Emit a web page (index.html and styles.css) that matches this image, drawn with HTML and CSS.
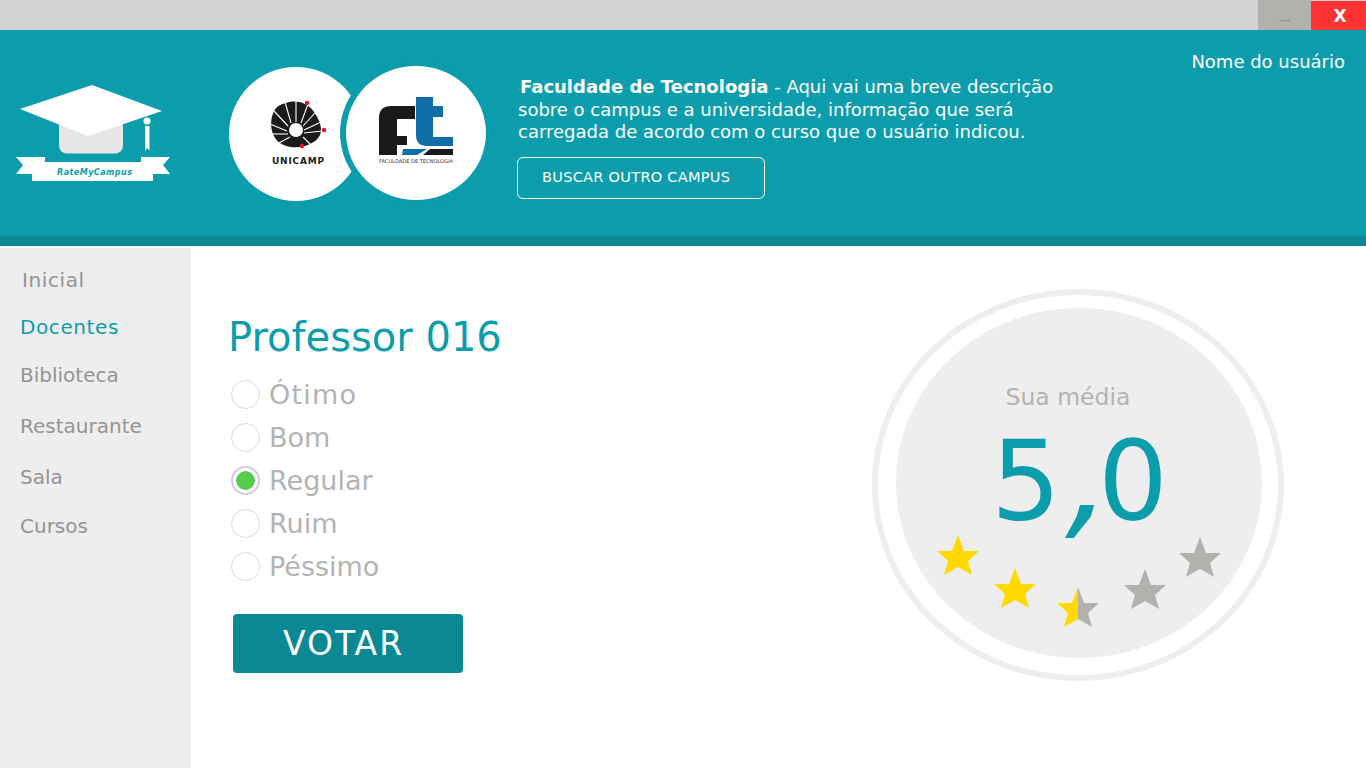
FILE: index.html
```html
<!DOCTYPE html>
<html lang="pt-br">
<head>
    <meta charset="UTF-8">
    <meta name="viewport" content="width=device-width, initial-scale=1.0">
    <title>RateMyCampus</title>
    <link rel="stylesheet" href="styles.css">
</head>
<body>
    <!-- Barra da janela -->
    <div class="titlebar">
        <button class="win-btn win-min">_</button>
        <button class="win-btn win-close">X</button>
    </div>

    <!-- Cabeçalho -->
    <header class="header">
        <svg class="brand" viewBox="0 60 200 140" width="200" height="140">
            <rect x="59" y="112" width="64" height="41.500" rx="8" fill="#e6e6e6"/>
            <polygon points="92,85 162,111 88,136 20,109" fill="#fff"/>
            <circle cx="147" cy="121" r="3.500" fill="#fff"/>
            <polygon points="145,126 149.500,126 149.500,151 147.200,148 145,151" fill="#fff"/>
            <polygon points="16,157 45,157 45,162 141,162 141,157 170,157 163,165 170,174 153,174 153,181 32,181 32,174 16,174 23,165" fill="#fff"/>
            <text class="brand-name" x="57" y="175" textLength="75">RateMyCampus</text>
        </svg>

        <svg class="campus-logos" viewBox="225 60 270 150" width="270" height="150">
            <circle cx="296" cy="134" r="67" fill="#fff"/>
            <ellipse cx="416" cy="133" rx="76" ry="73" fill="#0c9dac"/>
            <ellipse cx="416" cy="133" rx="70" ry="67" fill="#fff"/>

            <!-- Unicamp -->
            <path d="M286 103 C298 99 309 104 314 112 C318 118 321 123 321 130 C321 138 314 143 305 146 C294 149 281 147 275 138 C270 130 270 119 274 111 C277 106 281 104 286 103Z" fill="#1a1a1a"/>
            <g stroke="#fff" stroke-width="1.100">
                <line x1="296" y1="122" x2="296" y2="100"/>
                <line x1="291" y1="123" x2="285" y2="102"/>
                <line x1="288" y1="126" x2="274" y2="111"/>
                <line x1="287" y1="131" x2="270" y2="124"/>
                <line x1="288" y1="134" x2="270" y2="134"/>
                <line x1="290" y1="137" x2="277" y2="144"/>
                <line x1="301" y1="123" x2="308" y2="104"/>
                <line x1="303" y1="126" x2="315" y2="113"/>
                <line x1="304" y1="130" x2="321" y2="122"/>
                <line x1="304" y1="133" x2="322" y2="131"/>
                <line x1="303" y1="137" x2="312" y2="146"/>
            </g>
            <circle cx="296" cy="130" r="7" fill="#fff"/>
            <circle cx="307" cy="103" r="2.200" fill="#e5142a"/>
            <circle cx="324" cy="130" r="2.200" fill="#e5142a"/>
            <circle cx="302" cy="146" r="2.200" fill="#e5142a"/>
            <text class="unicamp" x="272" y="164" textLength="52">UNICAMP</text>

            <!-- FT -->
            <path d="M379 155 V118 Q379 106 391 106 H415 V119 H397 V136 H407 V145 H397 V155Z" fill="#1a1a1a"/>
            <path d="M416 97 H433 V106 H443 V117 H433 V137 H453 V146 H427 Q416 146 416 135Z" fill="#0f6da8"/>
            <polygon points="402,155 403,149 427,149 417,155" fill="#0f6da8"/>
            <polygon points="430,149 453,149 453,155 423,155" fill="#1a1a1a"/>
            <text class="ft-name" x="379" y="163" textLength="74" lengthAdjust="spacingAndGlyphs">FACULDADE DE TECNOLOGIA</text>
        </svg>

        <div class="campus-info">
            <p class="campus-text"><strong>Faculdade de Tecnologia</strong> - Aqui vai uma breve descrição<br>sobre o campus e a universidade, informação que será<br>carregada de acordo com o curso que o usuário indicou.</p>
            <button class="btn-outline">BUSCAR OUTRO CAMPUS</button>
        </div>

        <div class="user-name">Nome do usuário</div>
    </header>
    <div class="header-strip"></div>

    <div class="page">
        <!-- Menu lateral -->
        <nav class="sidebar">
            <a class="nav-item nav-inicial" href="#">Inicial</a>
            <a class="nav-item nav-docentes active" href="#">Docentes</a>
            <a class="nav-item nav-biblioteca" href="#">Biblioteca</a>
            <a class="nav-item nav-restaurante" href="#">Restaurante</a>
            <a class="nav-item nav-sala" href="#">Sala</a>
            <a class="nav-item nav-cursos" href="#">Cursos</a>
        </nav>

        <!-- Votação -->
        <main class="vote">
            <h1 class="vote-title">Professor 016</h1>
            <form class="vote-options">
                <label class="option option-wide"><input type="radio" name="nota"><span>Ótimo</span></label>
                <label class="option"><input type="radio" name="nota"><span>Bom</span></label>
                <label class="option"><input type="radio" name="nota" checked><span>Regular</span></label>
                <label class="option"><input type="radio" name="nota"><span>Ruim</span></label>
                <label class="option"><input type="radio" name="nota"><span>Péssimo</span></label>
            </form>
            <button class="btn-vote">VOTAR</button>
        </main>

        <!-- Média -->
        <aside class="score">
            <div class="score-ring">
                <div class="score-disc">
                    <div class="score-label">Sua média</div>
                    <div class="score-value">5<span class="score-comma">,</span>0</div>
                </div>
                <svg class="score-stars" viewBox="0 0 412 392" width="412" height="392">
                    <defs>
                        <polygon id="star" points="21,0 27,16 42,16 31,26 35,40 21,32 7,40 11,26 0,16 15,16"/>
                        <polygon id="star-left" points="21,0 21,32 7,40 11,26 0,16 15,16"/>
                        <polygon id="star-right" points="21,0 27,16 42,16 31,26 35,40 21,32"/>
                    </defs>
                    <use href="#star" x="65" y="246" fill="#ffd900"/>
                    <use href="#star" x="122" y="279" fill="#ffd900"/>
                    <use href="#star-left" x="185" y="298" fill="#ffd900"/>
                    <use href="#star-right" x="185" y="298" fill="#b3b1ae"/>
                    <use href="#star" x="252" y="280" fill="#b3b1ae"/>
                    <use href="#star" x="307" y="248" fill="#b3b1ae"/>
                </svg>
            </div>
        </aside>
    </div>
</body>
</html>
```

FILE: styles.css
```css
/* Estilos básicos da página */
* { box-sizing: border-box; }
html, body { height: 100%; }
body { margin: 0; height: 768px; overflow: hidden; background: #fff; font-family: "DejaVu Sans", sans-serif; display: flex; flex-direction: column; }
button { font-family: inherit; cursor: pointer; }

/* Barra da janela */
.titlebar { height: 30px; background: #d3d1d2; display: flex; justify-content: flex-end; flex-shrink: 0; }
.win-btn { border: 0; padding: 0; height: 30px; }
.win-min { width: 53px; background: #b3b1ae; color: #949290; font-size: 20px; line-height: 20px; padding: 0 0 12px 0; }
.win-close { width: 55px; background: #ff3333; color: #fff; font-size: 17px; font-weight: bold; margin-top: 1px; height: 29px; padding-left: 3px; }

/* Cabeçalho */
.header { height: 206px; background: #0c9dac; display: flex; align-items: flex-start; flex-shrink: 0; }
.brand { margin-top: 30px; flex-shrink: 0; }
.brand-name { font-size: 8px; font-weight: bold; font-style: italic; fill: #0c9dac; }
.campus-logos { margin-left: 25px; margin-top: 30px; flex-shrink: 0; }
.unicamp { font-size: 9px; font-weight: bold; fill: #1a1a1a; }
.ft-name { font-size: 5px; fill: #333; }
.campus-info { margin-left: 23px; padding-top: 46px; width: 620px; }
.campus-text { margin: 0; color: #fff; font-size: 18px; line-height: 22.500px; }
.campus-text strong { margin-left: 2px; }
.btn-outline { display: block; width: 248px; height: 42px; margin: 13px 0 0 -1px; padding: 0 0 2px 24px; text-align: left; background: transparent; color: #fff; border: 1.500px solid #fff; border-radius: 6px; font-size: 14.500px; letter-spacing: 0.300px; }
.user-name { margin-left: auto; margin-right: 21px; margin-top: 21px; color: #fff; font-size: 18px; }
.header-strip { height: 10px; background: #0a8995; flex-shrink: 0; }

/* Layout principal */
.page { flex: 1; display: flex; margin-top: 2px; min-height: 0; }

/* Menu lateral */
.sidebar { width: 191px; background: #eeeeee; flex-shrink: 0; display: flex; flex-direction: column; align-items: flex-start; padding-left: 20px; padding-top: 19px; }
.nav-item { color: #949494; font-size: 20px; line-height: 26px; text-decoration: none; }
.nav-item.active { color: #0c9dac; }
.nav-inicial { margin-left: 2px; letter-spacing: 0.600px; }
.nav-docentes { margin-top: 21px; letter-spacing: 0.600px; }
.nav-biblioteca { margin-top: 22px; }
.nav-restaurante { margin-top: 25px; }
.nav-sala { margin-top: 25px; }
.nav-cursos { margin-top: 23px; }

/* Votação */
.vote { width: 650px; padding-left: 37px; padding-top: 65px; flex-shrink: 0; }
.vote-title { margin: 0; color: #0c9dac; font-size: 40px; font-weight: normal; line-height: 48px; }
.vote-options { display: flex; flex-direction: column; margin-top: 12px; margin-left: 3px; }
.option { display: flex; align-items: center; gap: 9px; height: 43px; color: #b3b3b3; font-size: 27px; }
.option-wide { letter-spacing: 1.200px; }
.option input { appearance: none; margin: 0; width: 29px; height: 29px; border: 1.500px solid #d9d9d9; border-radius: 50%; background: #fff; flex-shrink: 0; }
.option input:checked { border: 2px solid #cfcfcf; background: radial-gradient(circle, #55cc4a 0 9px, #fff 9.500px); }
.btn-vote { display: block; width: 230px; height: 59px; margin: 26px 0 0 5px; padding: 0 0 0 50px; text-align: left; border: 0; border-radius: 4px; background: #0a8995; color: #fff; font-size: 33px; letter-spacing: 2px; }

/* Média */
.score { flex: 1; padding-top: 41px; padding-left: 31px; }
.score-ring { position: relative; width: 412px; height: 392px; border: 6px solid #eeeeee; border-radius: 50%; display: flex; align-items: center; justify-content: center; }
.score-disc { width: 366px; height: 350px; margin: 0 0 4px 2px; border-radius: 50%; background: #eeeeee; display: flex; flex-direction: column; align-items: center; padding-top: 74px; }
.score-label { color: #b3b3b3; font-size: 23.500px; line-height: 30px; margin-left: -22px; }
.score-value { color: #0c9dac; font-size: 110px; line-height: 112px; margin-top: 13px; margin-left: 2px; letter-spacing: 1px; }
.score-comma { display: inline-block; transform: translateX(5px) skewX(-16deg) scale(1.25, 1.25); transform-origin: 50% 75%; }
.score-stars { position: absolute; left: -6px; top: -6px; }
```
